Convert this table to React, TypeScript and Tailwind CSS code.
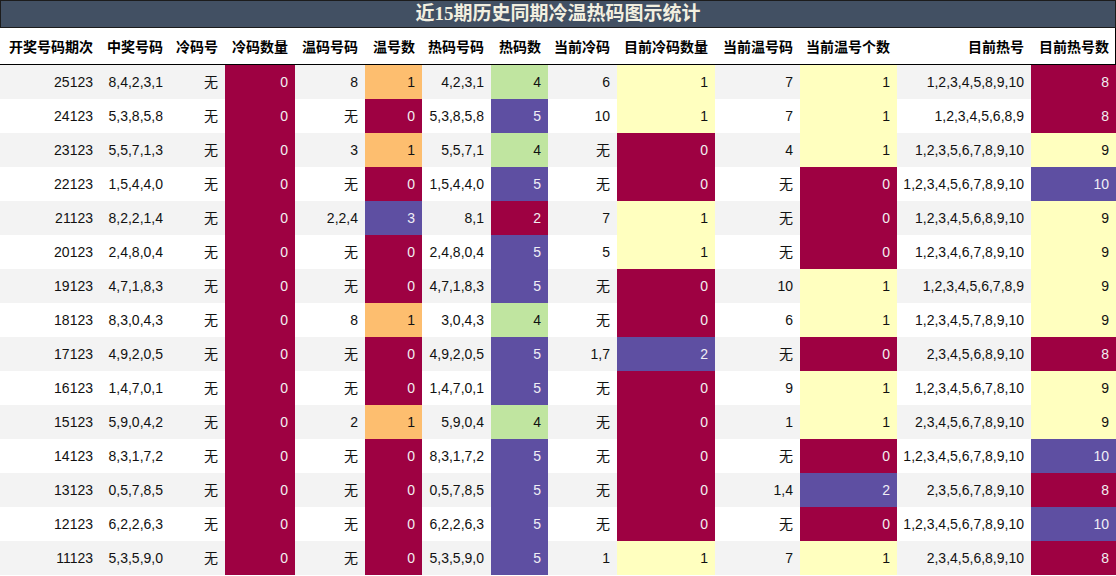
import React from 'react'

type Cell = string | number

const cols = [
  '开奖号码期次',
  '中奖号码',
  '冷码号',
  '冷码数量',
  '温码号码',
  '温号数',
  '热码号码',
  '热码数',
  '当前冷码',
  '目前冷码数量',
  '当前温号码',
  '当前温号个数',
  '目前热号',
  '目前热号数',
]

const rows: Cell[][] = [
  ['25123', '8,4,2,3,1', '无', 0, '8', 1, '4,2,3,1', 4, '6', 1, '7', 1, '1,2,3,4,5,8,9,10', 8],
  ['24123', '5,3,8,5,8', '无', 0, '无', 0, '5,3,8,5,8', 5, '10', 1, '7', 1, '1,2,3,4,5,6,8,9', 8],
  ['23123', '5,5,7,1,3', '无', 0, '3', 1, '5,5,7,1', 4, '无', 0, '4', 1, '1,2,3,5,6,7,8,9,10', 9],
  ['22123', '1,5,4,4,0', '无', 0, '无', 0, '1,5,4,4,0', 5, '无', 0, '无', 0, '1,2,3,4,5,6,7,8,9,10', 10],
  ['21123', '8,2,2,1,4', '无', 0, '2,2,4', 3, '8,1', 2, '7', 1, '无', 0, '1,2,3,4,5,6,8,9,10', 9],
  ['20123', '2,4,8,0,4', '无', 0, '无', 0, '2,4,8,0,4', 5, '5', 1, '无', 0, '1,2,3,4,6,7,8,9,10', 9],
  ['19123', '4,7,1,8,3', '无', 0, '无', 0, '4,7,1,8,3', 5, '无', 0, '10', 1, '1,2,3,4,5,6,7,8,9', 9],
  ['18123', '8,3,0,4,3', '无', 0, '8', 1, '3,0,4,3', 4, '无', 0, '6', 1, '1,2,3,4,5,7,8,9,10', 9],
  ['17123', '4,9,2,0,5', '无', 0, '无', 0, '4,9,2,0,5', 5, '1,7', 2, '无', 0, '2,3,4,5,6,8,9,10', 8],
  ['16123', '1,4,7,0,1', '无', 0, '无', 0, '1,4,7,0,1', 5, '无', 0, '9', 1, '1,2,3,4,5,6,7,8,10', 9],
  ['15123', '5,9,0,4,2', '无', 0, '2', 1, '5,9,0,4', 4, '无', 0, '1', 1, '2,3,4,5,6,7,8,9,10', 9],
  ['14123', '8,3,1,7,2', '无', 0, '无', 0, '8,3,1,7,2', 5, '无', 0, '无', 0, '1,2,3,4,5,6,7,8,9,10', 10],
  ['13123', '0,5,7,8,5', '无', 0, '无', 0, '0,5,7,8,5', 5, '无', 0, '1,4', 2, '2,3,5,6,7,8,9,10', 8],
  ['12123', '6,2,2,6,3', '无', 0, '无', 0, '6,2,2,6,3', 5, '无', 0, '无', 0, '1,2,3,4,5,6,7,8,9,10', 10],
  ['11123', '5,3,5,9,0', '无', 0, '无', 0, '5,3,5,9,0', 5, '1', 1, '7', 1, '2,3,4,5,6,8,9,10', 8],
]

// Spectral gradient shades per value, one table per coloured column
const red = 'bg-[#9e0142] text-[#f2eef0]'
const purple = 'bg-[#5e4fa2] text-[#f0eef6]'
const orange = 'bg-[#fdbe6f] text-[#111]'
const green = 'bg-[#c0e5a0] text-[#111]'
const yellow = 'bg-[#ffffbf] text-[#111]'

const shades: Record<number, Record<number, string>> = {
  3: { 0: red },
  5: { 0: red, 1: orange, 3: purple },
  7: { 2: red, 4: green, 5: purple },
  9: { 0: red, 1: yellow, 2: purple },
  11: { 0: red, 1: yellow, 2: purple },
  13: { 8: red, 9: yellow, 10: purple },
}

const grid =
  'grid grid-cols-[100px_70px_55px_70px_70px_57px_69px_57px_69px_98px_85px_97px_134px_85px]'

export default function App() {
  return (
    <div className="w-[1116px] h-[576px] overflow-hidden bg-white">
      <div className="h-[28px] bg-[#425063] border border-[#1c1c1c] flex items-center justify-center text-[19px] font-bold text-[#f2efe0] [font-family:'Liberation_Serif','Noto_Sans_CJK_SC',serif]">
        近15期历史同期冷温热码图示统计
      </div>
      <div className={`${grid} h-[37px] border-b border-r border-black bg-white`}>
        {cols.map((c) => (
          <div
            key={c}
            className="flex items-center justify-end pr-[7px] text-[14px] font-bold text-black whitespace-nowrap [font-family:'Noto_Sans_CJK_SC',sans-serif]"
          >
            {c}
          </div>
        ))}
      </div>
      {rows.map((r, i) => (
        <div
          key={i}
          className={`${grid} h-[34px] ${i % 2 === 0 ? 'bg-[#f3f3f3]' : 'bg-white'}`}
        >
          {r.map((v, j) => {
            const shade = typeof v === 'number' ? shades[j]?.[v] : undefined
            return (
              <div
                key={j}
                className={`flex items-center justify-end pr-[7px] text-[14px] whitespace-nowrap [font-family:'Liberation_Sans','Noto_Sans_CJK_SC',sans-serif] ${shade ?? 'text-[#111]'}`}
              >
                {v}
              </div>
            )
          })}
        </div>
      ))}
    </div>
  )
}
